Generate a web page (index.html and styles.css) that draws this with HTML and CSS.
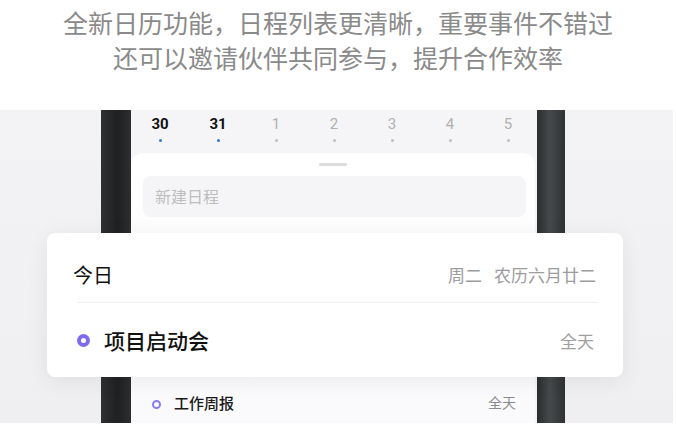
FILE: index.html
```html
<!DOCTYPE html>
<html lang="zh-CN">
<head>
	<meta charset="UTF-8">
	<meta name="viewport" content="width=device-width, initial-scale=1.0">
	<title>日历</title>
	<link rel="stylesheet" href="styles.css">
</head>
<body>
	<div class="intro">
		<p>全新日历功能，日程列表更清晰，重要事件不错过</p>
		<p>还可以邀请伙伴共同参与，提升合作效率</p>
	</div>
	<div class="stage">
		<div class="phone">
			<div class="bezel bezel-left"></div>
			<div class="screen">
				<div class="week">
					<div class="day active"><span>30</span><i></i></div>
					<div class="day active"><span>31</span><i></i></div>
					<div class="day"><span>1</span><i></i></div>
					<div class="day"><span>2</span><i></i></div>
					<div class="day"><span>3</span><i></i></div>
					<div class="day"><span>4</span><i></i></div>
					<div class="day"><span>5</span><i></i></div>
				</div>
				<div class="sheet">
					<div class="handle"></div>
					<div class="new-event">新建日程</div>
					<div class="list">
						<div class="item">
							<span class="ring small"></span>
							<span class="item-title">工作周报</span>
							<span class="item-time">全天</span>
						</div>
					</div>
				</div>
			</div>
			<div class="bezel bezel-right"></div>
		</div>
		<div class="today-card">
			<div class="card-head">
				<span class="card-title">今日</span>
				<span class="card-date"><span>周二</span><span>农历六月廿二</span></span>
			</div>
			<div class="divider"></div>
			<div class="card-event">
				<span class="ring"></span>
				<span class="event-title">项目启动会</span>
				<span class="event-time">全天</span>
			</div>
		</div>
	</div>
</body>
</html>
```
FILE: styles.css
```css
body {
	margin: 0;
	background: #fff;
	font-family: "Noto Sans CJK SC", "Noto Sans", sans-serif;
	color: #222;
}
.intro {
	height: 110px;
	padding-top: 5px;
	box-sizing: border-box;
	text-align: center;
	color: #8a8a8a;
	font-size: 25px;
	line-height: 35px;
}
.intro p {
	margin: 0;
}
.stage {
	position: relative;
	height: 313px;
	margin-right: 3px;
	background: linear-gradient(to bottom, #f3f3f5, #efeff1);
}
.phone {
	display: flex;
	height: 100%;
	width: 464px;
	margin-left: 101px;
}
.bezel-left {
	width: 30px;
	background: linear-gradient(to right, #2e3031, #1e2021 55%, #2c2e2f);
}
.bezel-right {
	width: 28px;
	background: linear-gradient(to right, #2a2c2d, #46494b 45%, #2f3132);
}
.screen {
	width: 406px;
	display: flex;
	flex-direction: column;
	background: #f5f5f7;
}
.week {
	display: flex;
	height: 43px;
}
.day {
	width: 58px;
	display: flex;
	flex-direction: column;
	align-items: center;
	padding-top: 5px;
	box-sizing: border-box;
}
.day span {
	font-family: Roboto, "Noto Sans", sans-serif;
	font-size: 15px;
	line-height: 18px;
	color: #b0b0b0;
}
.day i {
	width: 3px;
	height: 3px;
	margin-top: 6px;
	border-radius: 50%;
	background: #bdbdbd;
}
.day.active span {
	color: #111;
	font-weight: bold;
}
.day.active i {
	background: #2a7de1;
}
.sheet {
	flex: 1;
	margin-right: 2px;
	background: linear-gradient(to bottom, #fff, #fafafc);
	border-radius: 12px 12px 0 0;
}
.handle {
	width: 28px;
	height: 3px;
	margin: 10px auto 10px;
	border-radius: 2px;
	background: #dcdcdc;
}
.new-event {
	height: 41px;
	margin: 0 9px 0 12px;
	padding-left: 12px;
	border-radius: 8px;
	background: #f5f5f7;
	color: #bdbdbd;
	font-size: 16px;
	line-height: 41px;
}
.list {
	margin-top: 172px;
}
.item {
	display: flex;
	align-items: center;
	padding: 0 19px 0 21px;
	height: 26px;
}
.ring {
	width: 13px;
	height: 13px;
	box-sizing: border-box;
	border: 4px solid #7d6cf0;
	border-radius: 50%;
	flex-shrink: 0;
}
.ring.small {
	width: 9px;
	height: 9px;
	border-width: 2px;
	border-color: #8a7cf0;
	margin-top: 4px;
}
.item-title {
	margin-left: 13px;
	flex: 1;
	font-size: 15px;
	font-weight: 500;
	color: #1a1a1a;
}
.item-time {
	font-size: 14px;
	color: #8a8a8a;
}
.today-card {
	position: absolute;
	left: 47px;
	top: 123px;
	width: 576px;
	height: 144px;
	background: #fff;
	border-radius: 8px;
	box-shadow: 0 4px 22px rgba(0, 0, 0, 0.07);
}
.card-head {
	display: flex;
	justify-content: space-between;
	align-items: center;
	height: 69px;
	padding: 13px 27px 0 26px;
	box-sizing: border-box;
}
.card-title {
	font-size: 20px;
	color: #111;
}
.card-date {
	display: flex;
	gap: 12px;
	font-size: 17px;
	color: #9c9c9c;
}
.divider {
	height: 1px;
	margin: 0 25px 0 30px;
	background: #f0f0f0;
}
.card-event {
	display: flex;
	align-items: center;
	height: 74px;
	padding: 0 29px 0 30px;
}
.event-title {
	flex: 1;
	margin-left: 14px;
	font-size: 21px;
	font-weight: 500;
	color: #111;
}
.event-time {
	font-size: 17px;
	color: #a0a0a0;
}
```
